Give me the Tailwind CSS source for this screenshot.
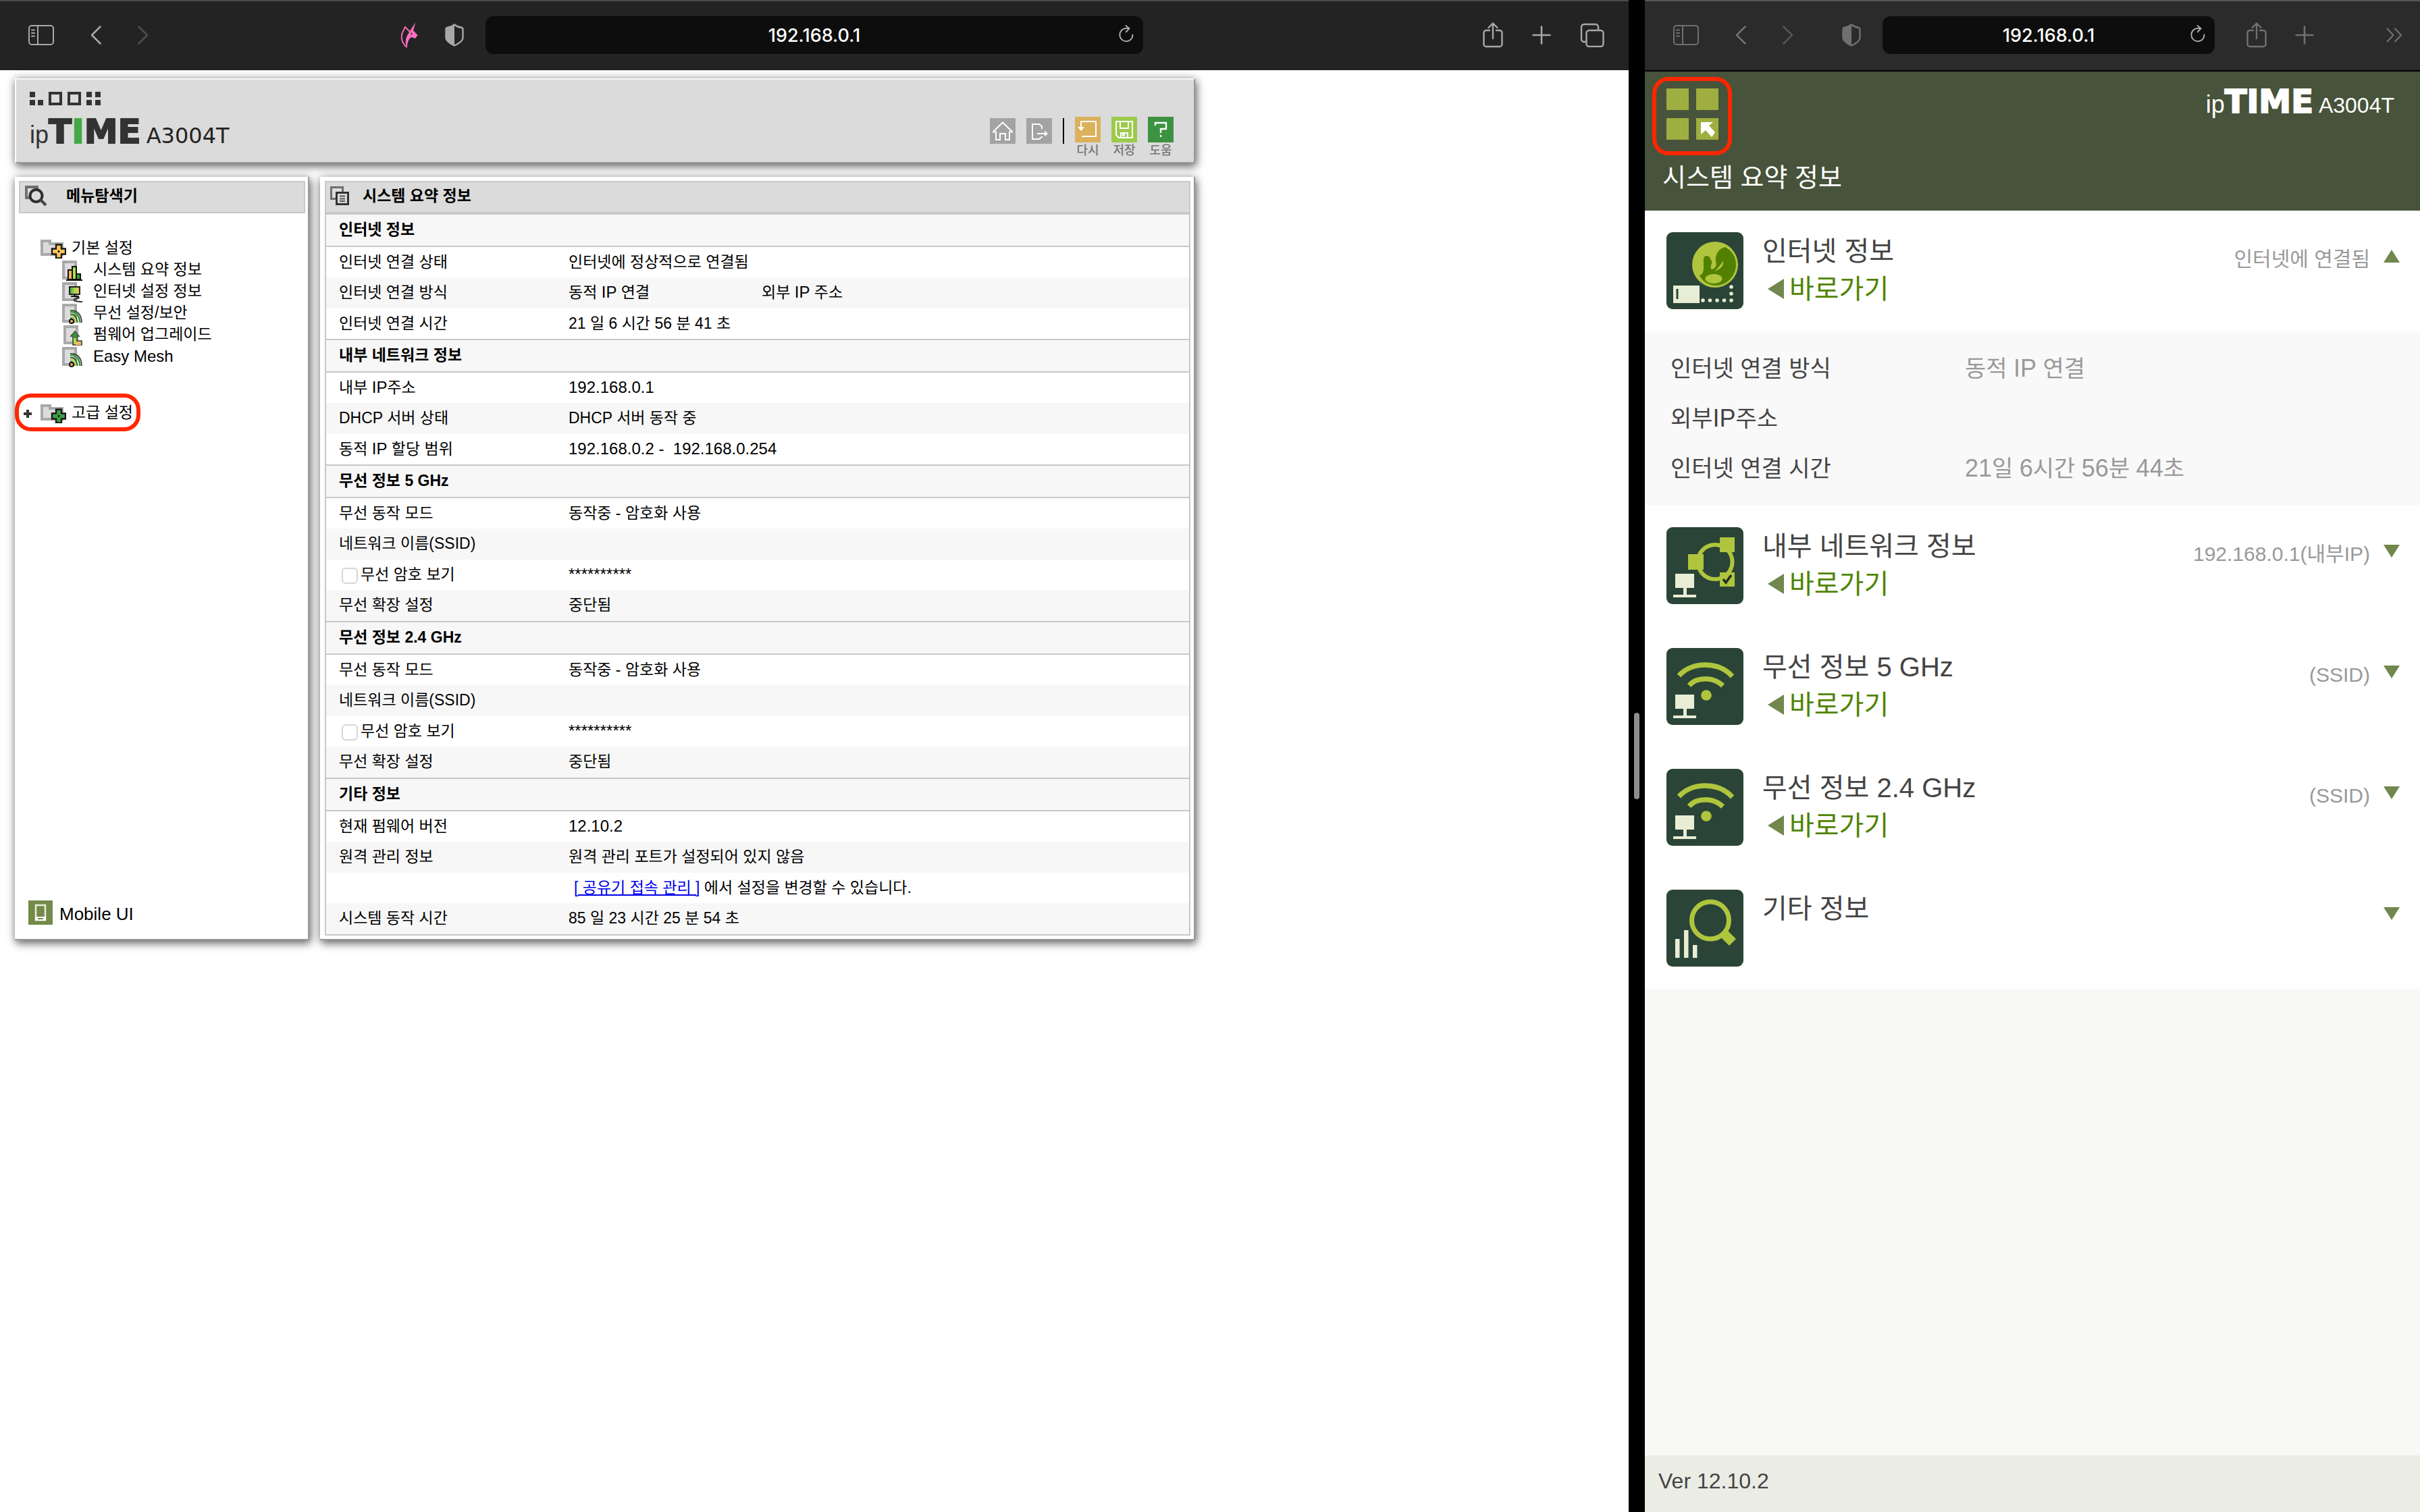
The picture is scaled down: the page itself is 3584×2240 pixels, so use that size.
<!DOCTYPE html>
<html lang="ko">
<head>
<meta charset="utf-8">
<meta name="viewport" content="width=device-width, initial-scale=1">
<title>ipTIME A3004T</title>
<script src="https://cdn.jsdelivr.net/npm/@tailwindcss/browser@4"></script>
</head>
<body class="bg-black font-['Liberation_Sans','Noto_Sans_CJK_KR',sans-serif] text-black">

<!-- Shared symbols -->
<svg class="hidden" aria-hidden="true">
  <symbol id="i-sidebar" viewBox="0 0 38 30"><g fill="none" stroke="currentColor" stroke-width="2"><rect x="1" y="1" width="36" height="28" rx="4"/><path d="M14 1v28"/><path d="M5 7.500h4M5 12h4M5 16.500h4" stroke-linecap="round"/></g></symbol>
  <symbol id="i-back" viewBox="0 0 16 28"><path d="M14.500 1.500 2 14l12.500 12.500" fill="none" stroke="currentColor" stroke-width="2.600" stroke-linecap="round" stroke-linejoin="round"/></symbol>
  <symbol id="i-fwd" viewBox="0 0 16 28"><path d="M1.500 1.500 14 14 1.500 26.500" fill="none" stroke="currentColor" stroke-width="2.600" stroke-linecap="round" stroke-linejoin="round"/></symbol>
  <symbol id="i-shield" viewBox="0 0 28 34"><path d="M14 1.500c3 2.500 7 4 11 4.500 1 .3 1.500 1 1.500 2v13c0 5-6 8.500-12.500 11.500C7.500 29.500 1.500 26 1.500 21V8c0-1 .5-1.700 1.500-2 4-.5 8-2 11-4.500z" fill="none" stroke="currentColor" stroke-width="2.400"/><path d="M14 1.500v31C7.500 29.500 1.500 26 1.500 21V8c0-1 .5-1.700 1.500-2 4-.5 8-2 11-4.500z" fill="currentColor"/></symbol>
  <symbol id="i-reload" viewBox="0 0 22 26"><path d="M20.500 14.500A9.600 9.600 0 1 1 11 5h4.500M10.500 1l5 4.200-4.800 5" fill="none" stroke="currentColor" stroke-width="2" stroke-linecap="round" stroke-linejoin="round"/></symbol>
  <symbol id="i-share" viewBox="0 0 30 38"><path d="M10 12H5a3.500 3.500 0 0 0-3.500 3.500v17A3.500 3.500 0 0 0 5 36h20a3.500 3.500 0 0 0 3.500-3.500v-17A3.500 3.500 0 0 0 25 12h-5M15 24V2M8.500 8 15 1.500 21.500 8" fill="none" stroke="currentColor" stroke-width="2.400" stroke-linecap="round" stroke-linejoin="round"/></symbol>
  <symbol id="i-plus" viewBox="0 0 28 28"><path d="M14 1.500v25M1.500 14h25" fill="none" stroke="currentColor" stroke-width="2.600" stroke-linecap="round"/></symbol>
  <symbol id="i-doc" viewBox="0 0 30 30"><rect x="2" y="2" width="18" height="24" fill="#dcdcdc" stroke="#a9a9a9" stroke-width="4"/></symbol>
  <symbol id="i-signal" viewBox="0 0 30 30"><use href="#i-doc"/><path d="M12 10h5c7 2 12 7 12 18" fill="none" stroke="#333" stroke-width="1.500"/><path d="M12 12h4c6 2 10 6 10.500 16" fill="none" stroke="#3f9b45" stroke-width="3"/><path d="M12 15.500c7 0 10 5 10.500 12.500" fill="none" stroke="#333" stroke-width="1.500"/><path d="M12 18c5 0 7.500 4 8 10" fill="none" stroke="#a6dc50" stroke-width="3"/><path d="M12 21c3 0 5.500 3 6 7" fill="none" stroke="#333" stroke-width="1.200"/><circle cx="14" cy="26" r="3" fill="#fdb561" stroke="#111" stroke-width="2"/></symbol>
  <symbol id="i-folder" viewBox="0 0 38 28"><path d="M2 2h12v4h18v16H2z" fill="#dcdcdc" stroke="#a9a9a9" stroke-width="4"/><path d="M23 7.500h8v6h6v8h-6v6h-8v-6h-6v-8h6z" fill="currentColor" stroke="#1a1a1a" stroke-width="2.400"/><path d="M25.500 17.500 27 16l1.500 1.500L27 19z" fill="#111" stroke="#111"/></symbol>
  <symbol id="i-wifi" viewBox="0 0 114 114"><rect width="114" height="114" rx="9" fill="#2b4438"/><path d="M18.500 41C38 19.500 77 19.500 97.500 42M33.500 55.500C45 42.500 70 42.500 83.500 56" fill="none" stroke="#afc53d" stroke-width="7.500"/><circle cx="59" cy="70" r="7.800" fill="#afc53d"/><path d="M13 69h28v21H30v10h14v4H10v-4h15V90H13z" fill="#e8eed5"/></symbol>
</svg>

<div class="grid min-h-screen grid-cols-[minmax(0,2412fr)_24px_minmax(0,1148fr)]">

  <!-- Desktop browser -->
  <section class="flex flex-col bg-white">
    <nav class="grid h-[104px] grid-cols-[minmax(0,719fr)_minmax(0,974fr)_minmax(0,719fr)] items-center border-t-2 border-[#4b4b4b] bg-[#232323] pb-0.5 text-[#a8a8a8]">
      <div class="flex items-center justify-between pr-8 pl-[42px]">
        <div class="flex items-center gap-[54px]">
          <button aria-label="사이드바"><svg class="block h-[30px] w-[38px]"><use href="#i-sidebar"/></svg></button>
          <button aria-label="뒤로"><svg class="block h-[28px] w-4"><use href="#i-back"/></svg></button>
          <button aria-label="앞으로" class="text-[#4d4d4d]"><svg class="block h-[28px] w-4"><use href="#i-fwd"/></svg></button>
        </div>
        <div class="flex items-center gap-10">
          <button aria-label="확장 프로그램"><svg class="block h-[38px] w-[26px]" viewBox="0 0 26 38"><path d="M22.500 0 14 13l-4 7c-3 6-3 12 0 18 0-8 2-13 6-16l6 2 3.500-5-6.500-7z" fill="#ff6fc0"/><path d="M14 14 7 7c-2 2-1 4-3 6C0 20 1 30 9.500 37" fill="none" stroke="#ff6fc0" stroke-width="1.800"/><circle cx="16.500" cy="17" r="1.200" fill="#232323"/></svg></button>
          <button aria-label="개인정보 보호"><svg class="block h-[34px] w-[28px]"><use href="#i-shield"/></svg></button>
        </div>
      </div>
      <div class="relative">
        <input type="text" aria-label="주소" value="192.168.0.1" class="block h-14 w-full rounded-xl bg-[#0d0d0d] text-center font-[Inter,sans-serif] text-[27px] font-medium text-white">
        <button aria-label="새로 고침" class="absolute top-[13px] right-3.5"><svg class="block h-[26px] w-[22px]"><use href="#i-reload"/></svg></button>
      </div>
      <div class="flex items-center justify-end gap-[43px] pr-9">
        <button aria-label="공유"><svg class="block h-[38px] w-[30px]"><use href="#i-share"/></svg></button>
        <button aria-label="새 탭"><svg class="block h-[28px] w-[28px]"><use href="#i-plus"/></svg></button>
        <button aria-label="탭 보기"><svg class="block h-9 w-9" viewBox="0 0 36 36" fill="none" stroke="currentColor" stroke-width="2.400"><rect x="9.500" y="11" width="25" height="24" rx="4"/><path d="M9 28H6a4 4 0 0 1-4-4V6a4 4 0 0 1 4-4h17a4 4 0 0 1 4 4v5"/></svg></button>
      </div>
    </nav>

    <main class="flex max-w-[1770px] flex-col gap-5 pt-3 pl-[22px]">
      <header class="flex h-[126px] items-end justify-between border-2 border-t-[#f6f6f6] border-r-[#999] border-b-[#999] border-l-white bg-[#dbdbdb] pr-[30px] pl-5 shadow-[2px_5px_12px_rgba(0,0,0,0.5),0_0_12px_rgba(0,0,0,0.25)]">
        <div class="flex flex-col gap-4 pb-4">
          <svg class="h-5 w-[106px]" viewBox="0 0 106 20" fill="#333"><path d="M0 0h8v8H0zM0 12h8v8H0zM12 12h8v8h-8z"/><path d="M30 2h16v16H30zM58 2h16v16H58z" fill="none" stroke="#333" stroke-width="4"/><path d="M84 0h8v8h-8zM97 0h8v8h-8zM84 12h8v8h-8zM97 12h8v8h-8z"/></svg>
          <a href="#" class="flex items-baseline leading-[46px] text-[#333]">
            <span class="text-[36px]">ip</span><span class="font-['DejaVu_Sans',sans-serif] text-[50px] font-bold [-webkit-text-stroke:2px_currentColor]">T<span class="text-[#43a847]">I</span>ME</span><span class="ml-2 font-['DejaVu_Sans',sans-serif] text-[32px] text-[#222]">A3004T</span>
          </a>
        </div>
        <div class="flex items-start gap-4 pb-[5px] text-center text-[18px] leading-6 font-medium text-[#777]">
          <button aria-label="홈" class="mt-0.5"><svg class="block h-[38px] w-[38px] bg-[#a3a3a3]" viewBox="0 0 38 38" fill="none" stroke="#fff" stroke-width="2"><path d="M4.500 20.500 19 6.500l14.500 14M4 20.500h5V32h6v-9h8v9h6V20.500h5"/></svg></button>
          <button aria-label="로그아웃" class="mt-0.5"><svg class="block h-[38px] w-[38px] bg-[#a3a3a3]" viewBox="0 0 38 38" fill="none" stroke="#fff" stroke-width="2"><path d="M23 16V12l-4-3H9v22h10l4-3v-1M16 23h12"/><path d="m27 18.500 5 4.500-5 4.500z" fill="#fff" stroke="none"/></svg></button>
          <span class="mt-0.5 h-[38px] w-0.5 bg-black"></span>
          <button><svg class="block h-[38px] w-[38px] bg-[#dcb15c]" viewBox="0 0 38 38" fill="none" stroke="#fff" stroke-width="2"><path d="M9 16V7h22v22H10"/><path d="M4 15h10l-5 6z" fill="#fff" stroke="none"/></svg>다시</button>
          <button><svg class="block h-[38px] w-[38px] bg-[#9ccb4b]" viewBox="0 0 38 38" fill="none" stroke="#fff" stroke-width="2"><path d="M7 7h24v24H11l-4-4zM13 7v10h12V7M14 31v-7h10v7"/><path d="M16 25h4v4h-4z" fill="#fff" stroke="none"/></svg>저장</button>
          <button><svg class="block h-[38px] w-[38px] bg-[#3d9241]" viewBox="0 0 38 38" fill="none" stroke="#fff" stroke-width="2.400"><path d="M11 13V9h16v9h-8v6M19 27v3"/></svg>도움</button>
        </div>
      </header>

      <div class="grid grid-cols-[436px_minmax(0,1fr)] gap-4">
        <!-- Menu -->
        <aside class="flex flex-col border-r-2 border-b-2 border-[#999] bg-white p-1.5 pr-1 shadow-[2px_5px_12px_rgba(0,0,0,0.5),0_0_12px_rgba(0,0,0,0.25)]">
          <h2 class="flex h-12 items-center gap-7 border-2 border-[#c9c9c9] bg-[#dbdbdb] pb-1 pl-1.5 text-[23px] leading-8 font-bold">
            <svg class="h-8 w-[34px]" viewBox="0 0 34 32" fill="none"><path d="M3 3h16v16H3z" fill="#dbdbdb" stroke="#6e6e6e" stroke-width="4"/><circle cx="17.500" cy="16" r="9" fill="#dbdbdb" stroke="#2e2e2e" stroke-width="4"/><path d="m24 22 8 8" stroke="#444" stroke-width="4"/></svg>
            메뉴탐색기
          </h2>
          <nav class="mt-[37px] flex flex-col pl-8 text-[23px] leading-[26px]">
            <a href="#" class="flex h-8 items-center gap-2"><svg class="h-7 w-[38px] text-[#fdc45c]"><use href="#i-folder"/></svg><span class="pb-1">기본 설정</span></a>
            <a href="#" class="flex h-8 items-center gap-4 pl-8"><svg class="h-[30px] w-[30px]" viewBox="0 0 30 30"><use href="#i-doc"/><g stroke="#111" stroke-width="2"><path d="M9 14h6v14H9z" fill="#fdb561"/><path d="M15 9h6v19h-6z" fill="#a6e04c"/><path d="M21 20h6v8h-6z" fill="#3f9b45"/><path d="M6 29h24"/></g></svg><span class="pb-1">시스템 요약 정보</span></a>
            <a href="#" class="flex h-8 items-center gap-4 pl-8"><svg class="h-[30px] w-[30px]" viewBox="0 0 30 30"><use href="#i-doc"/><defs><linearGradient id="scr"><stop stop-color="#3f9b45"/><stop offset=".5" stop-color="#a6dc50"/><stop offset="1" stop-color="#fdb561"/></linearGradient></defs><rect x="11" y="7" width="15" height="11" fill="url(#scr)" stroke="#222" stroke-width="2"/><path d="M18.500 18v4M13 21h12" stroke="#111" stroke-width="2"/><path d="M20 22c8 0 5 2 0 3s-3 4 10 4" fill="none" stroke="#333" stroke-width="2"/></svg><span class="pb-1">인터넷 설정 정보</span></a>
            <a href="#" class="flex h-8 items-center gap-4 pl-8"><svg class="h-[30px] w-[30px]"><use href="#i-signal"/></svg><span class="pb-1">무선 설정/보안</span></a>
            <a href="#" class="flex h-8 items-center gap-4 pl-8"><svg class="h-[30px] w-[30px]" viewBox="0 0 30 30"><rect x="4" y="2" width="18" height="24" fill="#dcdcdc" stroke="#a9a9a9" stroke-width="4"/><path d="M19 9l6 7h-3v7h7v6H16V16h-3z" fill="#a6e04c" stroke="#333" stroke-width="1.500"/><path d="m19 9 5.500 6.500h-11zM16 15h6v4h-6z" fill="#3f8b3c"/><path d="M22 24h6v5h-8z" fill="#fdb561"/></svg><span class="pb-1">펌웨어 업그레이드</span></a>
            <a href="#" class="flex h-8 items-center gap-4 pl-8"><svg class="h-[30px] w-[30px]"><use href="#i-signal"/></svg><span class="pb-0.5 text-[24px]">Easy Mesh</span></a>
            <a href="#" class="relative mt-[52px] flex h-8 items-center gap-2"><svg class="h-7 w-[38px] text-[#3fa044]"><use href="#i-folder"/></svg><span class="pb-1">고급 설정</span>
              <svg class="absolute -left-[26px] h-3.5 w-3.5" viewBox="0 0 14 14"><path d="M7 1v12M1 7h12" stroke="#333" stroke-width="4"/></svg>
              <span class="absolute -top-3.5 -left-[38px] h-14 w-[186px] rounded-3xl border-[6px] border-[#ff2600]"></span>
            </a>
          </nav>
          <a href="#" class="mt-auto flex items-center gap-2.5 pb-[13px] pl-3.5 text-[26px] leading-9"><svg class="h-9 w-9 bg-[#738a49]" viewBox="0 0 36 36"><rect x="11" y="7" width="14" height="22" fill="none" stroke="#e9eddf" stroke-width="2.500"/><path d="M10 24h16v6H10z" fill="#fff"/><path d="M14 27h8" stroke="#738a49" stroke-width="2"/></svg><span class="pt-1">Mobile UI</span></a>
        </aside>

        <!-- System summary -->
        <article class="border-r-2 border-b-2 border-[#999] bg-white pt-1.5 pr-[5px] pb-[5px] pl-[7px] shadow-[2px_5px_12px_rgba(0,0,0,0.5),0_0_12px_rgba(0,0,0,0.25)]">
          <h1 class="flex h-12 items-center gap-5 border-2 border-[#c9c9c9] bg-[#dbdbdb] pb-1 pl-1.5 text-[23px] leading-8 font-bold">
            <svg class="h-7 w-7" viewBox="0 0 28 28" fill="#dbdbdb" stroke-width="3"><path d="M1.500 1.500h17v17h-17z" stroke="#6e6e6e"/><path d="M9.500 9.500h17v17h-17z" stroke="#333"/><path d="M14 14.500h8M14 18.500h8M14 22h8" stroke="#555" stroke-width="2"/></svg>
            시스템 요약 정보
          </h1>
          <table class="w-full table-fixed border-separate border-spacing-0 border-x-2 border-b-2 border-[#c8c8c8] text-left text-[23px] leading-7 [&_td]:p-0 [&_td]:pb-0.5 [&_th]:p-0 [&_th]:pb-0.5 [&_th]:pl-[19px]">
            <colgroup><col class="w-[359px]"><col class="w-[286px]"><col></colgroup>
            <tbody>
              <tr><th colspan="3" class="h-[50px] border-y-2 border-[#c8c8c8] bg-[#f7f7f7] font-bold">인터넷 정보</th></tr>
              <tr class="h-[45px]"><th class="font-normal">인터넷 연결 상태</th><td colspan="2">인터넷에 정상적으로 연결됨</td></tr>
              <tr class="h-[46px] bg-[#f7f7f7]"><th class="font-normal">인터넷 연결 방식</th><td>동적 <span class="text-[24px]">IP</span> 연결</td><td>외부 <span class="text-[24px]">IP</span> 주소</td></tr>
              <tr class="h-[45px]"><th class="font-normal">인터넷 연결 시간</th><td colspan="2">21 일 6 시간 56 분 41 초</td></tr>
            </tbody>
            <tbody>
              <tr><th colspan="3" class="h-[50px] border-y-2 border-[#c8c8c8] bg-[#f7f7f7] font-bold">내부 네트워크 정보</th></tr>
              <tr class="h-[45px]"><th class="font-normal">내부 <span class="text-[24px]">IP</span>주소</th><td colspan="2" class="text-[24px]">192.168.0.1</td></tr>
              <tr class="h-[46px] bg-[#f7f7f7]"><th class="font-normal">DHCP 서버 상태</th><td colspan="2">DHCP 서버 동작 중</td></tr>
              <tr class="h-[45px]"><th class="font-normal">동적 <span class="text-[24px]">IP</span> 할당 범위</th><td colspan="2" class="text-[24px]">192.168.0.2 -&nbsp; 192.168.0.254</td></tr>
            </tbody>
            <tbody>
              <tr><th colspan="3" class="h-[50px] border-y-2 border-[#c8c8c8] bg-[#f7f7f7] font-bold">무선 정보 5 GHz</th></tr>
              <tr class="h-[45px]"><th class="font-normal">무선 동작 모드</th><td colspan="2">동작중 - 암호화 사용</td></tr>
              <tr class="h-[46px] bg-[#f7f7f7]"><th class="font-normal">네트워크 이름(SSID)</th><td colspan="2"></td></tr>
              <tr class="h-[45px]"><th class="font-normal"><label class="flex items-center gap-1 pl-1"><input type="checkbox" class="mt-1 h-6 w-6 appearance-none rounded-md border-2 border-[#d6d6d6] bg-white">무선 암호 보기</label></th><td colspan="2" class="text-[24px]">**********</td></tr>
              <tr class="h-[46px] bg-[#f7f7f7]"><th class="font-normal">무선 확장 설정</th><td colspan="2">중단됨</td></tr>
            </tbody>
            <tbody>
              <tr><th colspan="3" class="h-[50px] border-y-2 border-[#c8c8c8] bg-[#f7f7f7] font-bold">무선 정보 2.4 GHz</th></tr>
              <tr class="h-[45px]"><th class="font-normal">무선 동작 모드</th><td colspan="2">동작중 - 암호화 사용</td></tr>
              <tr class="h-[46px] bg-[#f7f7f7]"><th class="font-normal">네트워크 이름(SSID)</th><td colspan="2"></td></tr>
              <tr class="h-[45px]"><th class="font-normal"><label class="flex items-center gap-1 pl-1"><input type="checkbox" class="mt-1 h-6 w-6 appearance-none rounded-md border-2 border-[#d6d6d6] bg-white">무선 암호 보기</label></th><td colspan="2" class="text-[24px]">**********</td></tr>
              <tr class="h-[46px] bg-[#f7f7f7]"><th class="font-normal">무선 확장 설정</th><td colspan="2">중단됨</td></tr>
            </tbody>
            <tbody>
              <tr><th colspan="3" class="h-[50px] border-y-2 border-[#c8c8c8] bg-[#f7f7f7] font-bold">기타 정보</th></tr>
              <tr class="h-[45px]"><th class="font-normal">현재 펌웨어 버전</th><td colspan="2" class="text-[24px]">12.10.2</td></tr>
              <tr class="h-[46px] bg-[#f7f7f7]"><th class="font-normal">원격 관리 정보</th><td colspan="2">원격 관리 포트가 설정되어 있지 않음</td></tr>
              <tr class="h-[45px]"><th></th><td colspan="2"><a href="#" class="ml-2 text-[#0000ee] underline">[ 공유기 접속 관리 ]</a> 에서 설정을 변경할 수 있습니다.</td></tr>
              <tr class="h-[46px] bg-[#f7f7f7]"><th class="font-normal">시스템 동작 시간</th><td colspan="2">85 일 23 시간 25 분 54 초</td></tr>
            </tbody>
          </table>
        </article>
      </div>
    </main>
  </section>

  <!-- Split handle -->
  <div class="flex items-center justify-center bg-black"><span class="h-32 w-2 rounded-full bg-[#8e8e8e]"></span></div>

  <!-- Mobile browser -->
  <section class="flex flex-col bg-[#f8f9f4]">
    <nav class="grid h-[106px] grid-cols-[minmax(0,352fr)_minmax(0,492fr)_minmax(0,304fr)] items-center border-t-2 border-b-2 border-t-[#555] border-b-black bg-[#2b2b2b] pb-0.5 text-[#707070]">
      <div class="flex items-center justify-between pr-8 pl-[42px]">
        <div class="flex items-center gap-[54px]">
          <button aria-label="사이드바"><svg class="block h-[30px] w-[38px]"><use href="#i-sidebar"/></svg></button>
          <button aria-label="뒤로"><svg class="block h-[28px] w-4"><use href="#i-back"/></svg></button>
          <button aria-label="앞으로" class="text-[#555]"><svg class="block h-[28px] w-4"><use href="#i-fwd"/></svg></button>
        </div>
        <button aria-label="개인정보 보호"><svg class="block h-[34px] w-[28px]"><use href="#i-shield"/></svg></button>
      </div>
      <div class="relative">
        <input type="text" aria-label="주소" value="192.168.0.1" class="block h-14 w-full rounded-xl bg-[#0d0d0d] text-center font-[Inter,sans-serif] text-[27px] font-medium text-white">
        <button aria-label="새로 고침" class="absolute top-[13px] right-3.5 text-[#a8a8a8]"><svg class="block h-[26px] w-[22px]"><use href="#i-reload"/></svg></button>
      </div>
      <div class="flex items-center justify-between pr-[26px] pl-[47px]">
        <div class="flex items-center gap-[42px]">
          <button aria-label="공유"><svg class="block h-[38px] w-[30px]"><use href="#i-share"/></svg></button>
          <button aria-label="새 탭"><svg class="block h-[28px] w-[28px]"><use href="#i-plus"/></svg></button>
        </div>
        <button aria-label="더 보기"><svg class="block h-[22px] w-6" viewBox="0 0 24 22"><path d="m1.500 1.500 9 9.500-9 9.500M13 1.500l9 9.500-9 9.500" fill="none" stroke="currentColor" stroke-width="2.200" stroke-linecap="round"/></svg></button>
      </div>
    </nav>

    <header class="flex h-[206px] flex-col justify-between bg-[#47533a] pt-[25px] pr-[38px] pb-[26px] pl-[26px] text-white">
      <div class="flex items-start justify-between">
        <button aria-label="메뉴" class="relative ml-1.5">
          <svg class="block h-[76px] w-[77px]" viewBox="0 0 77 76"><path d="M0 0h33v32H0zM44 0h33v32H44zM0 44h33v32H0zM44 44h33v32H44z" fill="#9fae40"/><path d="M51 50h18l-6 5 9 10-5 7-9-10-7 6z" fill="#fff"/></svg>
          <span class="absolute -top-[17px] -right-5 -bottom-[23px] -left-[21px] rounded-3xl border-[6px] border-[#ff2600]"></span>
        </button>
        <a href="#" class="-mt-1 flex items-baseline leading-[46px]">
          <span class="text-[36px]">ip</span><span class="font-['DejaVu_Sans',sans-serif] text-[48px] font-bold [-webkit-text-stroke:2px_currentColor]">TIME</span><span class="ml-2 text-[32px]">A3004T</span>
        </a>
      </div>
      <h1 class="text-[38px] leading-[46px]">시스템 요약 정보</h1>
    </header>

    <section class="bg-white text-[40px] leading-[56px] text-[#444]">
      <div class="flex h-[179px] items-start pt-8 pr-[30px] pl-8">
        <svg class="h-[114px] w-[114px]" viewBox="0 0 114 114"><rect width="114" height="114" rx="9" fill="#2b4438"/><circle cx="72" cy="48" r="34" fill="#afc53d"/><path d="M87 22c11 6 16 15 16 27-1 17-14 30-31 30-12-1-19-7-23-15 5-2 6-6 6-12V38c3-5 8-3 10 1 1 3 4 5 1 9 0 5-1 6 1 7 6-1 8-6 6-12-1-9 4-19 14-21z" fill="#528000"/><ellipse cx="70" cy="69" rx="12.500" ry="7" fill="#afc53d"/><path d="M84 43c1 7-4 12-13 15 6-5 8-9 13-15z" fill="#afc53d"/><path d="M10 79h39v26H10z" fill="#e8eed5"/><path d="M16 84v15" stroke="#2b4438" stroke-width="3"/><g fill="#e8eed5"><circle cx="54" cy="101" r="2.800"/><circle cx="64.500" cy="101" r="2.800"/><circle cx="75" cy="101" r="2.800"/><circle cx="85.500" cy="101" r="2.800"/><circle cx="96" cy="101" r="2.800"/><circle cx="96" cy="91" r="2.800"/><circle cx="96" cy="81" r="2.800"/></g></svg>
        <div class="flex flex-1 flex-col pl-7">
          <h2>인터넷 정보</h2>
          <a href="#" class="flex items-center gap-2 pl-2 text-[#4f8400]"><svg class="h-[30px] w-6" viewBox="0 0 24 30"><path d="M24 0v30L0 15z" fill="#71874d"/></svg>바로가기</a>
        </div>
        <div class="flex items-start gap-5 pt-[26px] text-[30px] leading-7 text-[#999]"><span>인터넷에 연결됨</span><svg class="h-[19px] w-6" viewBox="0 0 24 19"><path d="M12 0l12 19H0z" fill="#71874d"/></svg></div>
      </div>

      <dl class="grid auto-rows-[74px] grid-cols-[436px_minmax(0,1fr)] items-center bg-[#f9f9f9] py-[18px] pl-[38px] text-[34px] leading-[48px]">
        <dt>인터넷 연결 방식</dt><dd class="text-[#999]">동적 <span class="text-[36px]">IP</span> 연결</dd>
        <dt>외부<span class="text-[36px]">IP</span>주소</dt><dd></dd>
        <dt>인터넷 연결 시간</dt><dd class="text-[#999]"><span class="text-[36px]">21</span>일 <span class="text-[36px]">6</span>시간 <span class="text-[36px]">56</span>분 <span class="text-[36px]">44</span>초</dd>
      </dl>

      <div class="flex h-[179px] items-start pt-8 pr-[30px] pl-8">
        <svg class="h-[114px] w-[114px]" viewBox="0 0 114 114"><rect width="114" height="114" rx="9" fill="#2b4438"/><circle cx="72" cy="51.500" r="25.500" fill="none" stroke="#afc53d" stroke-width="6"/><path d="M79 15h22v22H79zM32 40h23v23H32zM79 67h22v21H79z" fill="#afc53d"/><path d="m84 77 4 5 8-11" fill="none" stroke="#1d2d25" stroke-width="3.500"/><path d="M13 69h28v21H30v10h14v4H10v-4h15V90H13z" fill="#e8eed5"/></svg>
        <div class="flex flex-1 flex-col pl-7">
          <h2>내부 네트워크 정보</h2>
          <a href="#" class="flex items-center gap-2 pl-2 text-[#4f8400]"><svg class="h-[30px] w-6" viewBox="0 0 24 30"><path d="M24 0v30L0 15z" fill="#71874d"/></svg>바로가기</a>
        </div>
        <div class="flex items-start gap-5 pt-[26px] text-[30px] leading-7 text-[#999]"><span>192.168.0.1(내부IP)</span><svg class="h-[19px] w-6" viewBox="0 0 24 19"><path d="M0 0h24L12 19z" fill="#71874d"/></svg></div>
      </div>
      <div class="flex h-[179px] items-start pt-8 pr-[30px] pl-8">
        <svg class="h-[114px] w-[114px]"><use href="#i-wifi"/></svg>
        <div class="flex flex-1 flex-col pl-7">
          <h2>무선 정보 5 GHz</h2>
          <a href="#" class="flex items-center gap-2 pl-2 text-[#4f8400]"><svg class="h-[30px] w-6" viewBox="0 0 24 30"><path d="M24 0v30L0 15z" fill="#71874d"/></svg>바로가기</a>
        </div>
        <div class="flex items-start gap-5 pt-[26px] text-[30px] leading-7 text-[#999]"><span>(SSID)</span><svg class="h-[19px] w-6" viewBox="0 0 24 19"><path d="M0 0h24L12 19z" fill="#71874d"/></svg></div>
      </div>
      <div class="flex h-[179px] items-start pt-8 pr-[30px] pl-8">
        <svg class="h-[114px] w-[114px]"><use href="#i-wifi"/></svg>
        <div class="flex flex-1 flex-col pl-7">
          <h2>무선 정보 2.4 GHz</h2>
          <a href="#" class="flex items-center gap-2 pl-2 text-[#4f8400]"><svg class="h-[30px] w-6" viewBox="0 0 24 30"><path d="M24 0v30L0 15z" fill="#71874d"/></svg>바로가기</a>
        </div>
        <div class="flex items-start gap-5 pt-[26px] text-[30px] leading-7 text-[#999]"><span>(SSID)</span><svg class="h-[19px] w-6" viewBox="0 0 24 19"><path d="M0 0h24L12 19z" fill="#71874d"/></svg></div>
      </div>
      <div class="flex h-[179px] items-start pt-8 pr-[30px] pl-8">
        <svg class="h-[114px] w-[114px]" viewBox="0 0 114 114"><rect width="114" height="114" rx="9" fill="#2b4438"/><circle cx="65" cy="45.500" r="27.500" fill="none" stroke="#afc53d" stroke-width="7"/><path d="m91 61 12 12-10 10-12-12z" fill="#afc53d"/><path d="M13 73h6.500v28H13zM26 60h6.500v41H26zM39 82h6.500v19H39z" fill="#e8eed5"/></svg>
        <div class="flex flex-1 flex-col pl-7"><h2>기타 정보</h2></div>
        <div class="pt-[26px]"><svg class="block h-[19px] w-6" viewBox="0 0 24 19"><path d="M0 0h24L12 19z" fill="#71874d"/></svg></div>
      </div>
    </section>

    <footer class="mt-auto flex h-[84px] items-center bg-[#ebede5] pb-2 pl-5 text-[32px] text-[#444]">Ver 12.10.2</footer>
  </section>
</div>
</body>
</html>
